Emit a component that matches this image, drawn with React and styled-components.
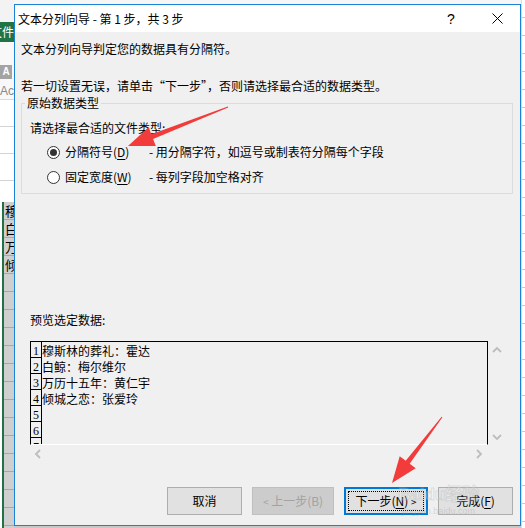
import React from "react";
import styled, { createGlobalStyle } from "styled-components";

const UI_FONT = `"Noto Sans CJK SC", "Microsoft YaHei", sans-serif`;

const GlobalStyle = createGlobalStyle`
  html, body {
    margin: 0;
    padding: 0;
  }

  body {
    width: 525px;
    height: 528px;
    overflow: hidden;
    font-family: ${UI_FONT};
    -webkit-font-smoothing: none;
  }
`;

const previewRows = [
  "穆斯林的葬礼：霍达",
  "白鲸：梅尔维尔",
  "万历十五年：黄仁宇",
  "倾城之恋：张爱玲",
  "",
  "",
  "",
];

const sheetCells = ["穆", "白", "万", "倾", "", "", "", "", "", "", "", "", "", "", "", "", "", ""];

const Chevron = ({ dir }) => {
  const paths = {
    up: "M1 6 L5 2 L9 6",
    down: "M1 2 L5 6 L9 2",
    left: "M6 1 L2 5 L6 9",
    right: "M2 1 L6 5 L2 9",
  };
  const vertical = dir === "up" || dir === "down";
  return (
    <svg width={vertical ? 10 : 8} height={vertical ? 8 : 10} viewBox={vertical ? "0 0 10 8" : "0 0 8 10"}>
      <path d={paths[dir]} fill="none" stroke="#bdbdbd" strokeWidth="1.8" />
    </svg>
  );
};

const App = () => {
  return (
    <>
      <GlobalStyle />
      <Screen>
        <LeftStrip>
          <QuickBar />
          <FileTab>文件</FileTab>
          <RibbonGap />
          <AppIconRow>
            <AppIcon>A</AppIcon>
          </AppIconRow>
          <AppLabel>Acc</AppLabel>
          <SheetLines />
          <SelectedColumn>
            {sheetCells.map((c, i) => (
              <SheetCell key={i}>{c}</SheetCell>
            ))}
          </SelectedColumn>
        </LeftStrip>

        <MainColumn>
          <TopStrip />
          <Dialog>
            <TitleBar>
              <Title>文本分列向导 - 第 1 步，共 3 步</Title>
              <CaptionButton>
                <HelpGlyph>?</HelpGlyph>
              </CaptionButton>
              <CaptionButton>
                <svg width="11" height="11" viewBox="0 0 11 11">
                  <path d="M0.5 0.5 L10.5 10.5 M10.5 0.5 L0.5 10.5" stroke="#000" strokeWidth="1" />
                </svg>
              </CaptionButton>
            </TitleBar>

            <Body>
              <Text>文本分列向导判定您的数据具有分隔符。</Text>
              <Text $gap={21}>若一切设置无误，请单击“下一步”，否则请选择最合适的数据类型。</Text>

              <GroupBox>
                <Legend>原始数据类型</Legend>
                <Text $gap={9}>请选择最合适的文件类型:</Text>
                <RadioRow $gap={8}>
                  <Radio $checked />
                  <span>
                    分隔符号(<u>D</u>)
                  </span>
                  <span>- 用分隔字符，如逗号或制表符分隔每个字段</span>
                </RadioRow>
                <RadioRow $gap={9}>
                  <Radio />
                  <span>
                    固定宽度(<u>W</u>)
                  </span>
                  <span>- 每列字段加空格对齐</span>
                </RadioRow>
              </GroupBox>

              <PreviewSection>
                <Text>预览选定数据:</Text>
                <Preview>
                  <PreviewFrame>
                    {previewRows.map((row, i) => (
                      <PreviewRow key={i}>
                        <RowNumber>{i + 1}</RowNumber>
                        <RowText>{row}</RowText>
                      </PreviewRow>
                    ))}
                  </PreviewFrame>
                  <VScroll>
                    <Chevron dir="up" />
                    <Chevron dir="down" />
                  </VScroll>
                  <HScroll>
                    <Chevron dir="left" />
                    <Chevron dir="right" />
                  </HScroll>
                </Preview>
              </PreviewSection>

              <ButtonRow>
                <Button $w={75}>取消</Button>
                <Button $w={82} disabled>
                  <Small>&lt;</Small> 上一步(B)
                </Button>
                <Button $w={84} $primary>
                  下一步(<u>N</u>) <Small>&gt;</Small>
                </Button>
                <Button $w={75}>
                  完成(<u>F</u>)
                </Button>
              </ButtonRow>
            </Body>
          </Dialog>
          <BottomStrip />
        </MainColumn>

        <RightStrip />

        <Watermark>
          <WatermarkBig>Baidu经验</WatermarkBig>
          <WatermarkSmall>jingyan.baidu.com</WatermarkSmall>
        </Watermark>

        <Annotations width="525" height="528" viewBox="0 0 525 528">
          <polygon
            points="228.2,107.5 153.1,138.9 155.8,145.9 128,146 148.6,127.3 151.3,134.3 227.8,106.5"
            fill="#f23b3b"
          />
          <polygon
            points="442.4,417.3 409.7,463.8 415.7,468.3 392,483 399.7,456.3 405.7,460.8 441.6,416.7"
            fill="#f23b3b"
          />
        </Annotations>
      </Screen>
    </>
  );
};

const Screen = styled.div`
  position: relative;
  display: flex;
  width: 525px;
  height: 528px;
  overflow: hidden;
  background: #ffffff;
`;

/* ---- excel window peeking out behind the dialog ---- */

const LeftStrip = styled.div`
  display: flex;
  flex-direction: column;
  width: 14px;
  flex-shrink: 0;
  overflow: hidden;
`;

const QuickBar = styled.div`
  height: 22px;
  background: #f3f3f3;
`;

const FileTab = styled.div`
  height: 20px;
  background: #217346;
  color: #fff;
  font-size: 12px;
  line-height: 20px;
  white-space: nowrap;
  direction: rtl;
  overflow: hidden;
`;

const RibbonGap = styled.div`
  height: 20px;
  background: #f8f8f8;
`;

const AppIconRow = styled.div`
  height: 20px;
  background: #f8f8f8;
  display: flex;
  align-items: center;
`;

const AppIcon = styled.div`
  width: 12px;
  height: 14px;
  background: #a4a4a4;
  color: #fff;
  font-family: "Liberation Sans", sans-serif;
  font-size: 10px;
  font-weight: bold;
  line-height: 14px;
  text-align: center;
`;

const AppLabel = styled.div`
  height: 18px;
  background: #f8f8f8;
  color: #888;
  font-family: "Liberation Sans", sans-serif;
  font-size: 12px;
  line-height: 18px;
  border-bottom: 1px solid #dadada;
  box-sizing: border-box;
  overflow: hidden;
`;

const SheetLines = styled.div`
  height: 102px;
  background: repeating-linear-gradient(#ffffff 0 26px, #d4d4d4 26px 27px);
`;

const SelectedColumn = styled.div`
  flex: 1;
  border-left: 2px solid #217346;
  margin-left: 2px;
  background: #cfcfcf;
  overflow: hidden;
`;

const SheetCell = styled.div`
  height: 18px;
  box-sizing: border-box;
  border-bottom: 1px solid #a8a8a8;
  font-size: 13px;
  line-height: 17px;
  color: #000;
  padding-left: 1px;
  white-space: nowrap;
`;

const MainColumn = styled.div`
  display: flex;
  flex-direction: column;
  width: 507px;
  flex-shrink: 0;
`;

const TopStrip = styled.div`
  height: 4px;
  background: #f6f6f6;
`;

const BottomStrip = styled.div`
  flex: 1;
  background: #c8c8c8;
`;

const RightStrip = styled.div`
  flex: 1;
  background: repeating-linear-gradient(#ffffff 0 17px, #c8c8c8 17px 18px);
  border-left: 1px solid #dcdcdc;
`;

/* ---- the dialog ---- */

const Dialog = styled.div`
  display: flex;
  flex-direction: column;
  box-sizing: border-box;
  width: 507px;
  height: 522px;
  border: 1px solid #1a82d6;
  background: #f0f0f0;
  color: #000;
`;

const TitleBar = styled.div`
  display: flex;
  align-items: center;
  height: 27px;
  background: #ffffff;
`;

const Title = styled.div`
  flex: 1;
  padding-left: 3px;
  font-size: 12px;
  line-height: 16px;
`;

const CaptionButton = styled.div`
  display: flex;
  align-items: center;
  justify-content: center;
  width: 46px;
  height: 27px;
`;

const HelpGlyph = styled.span`
  font-family: "Liberation Sans", sans-serif;
  font-size: 14px;
  line-height: 16px;
`;

const Body = styled.div`
  flex: 1;
  display: flex;
  flex-direction: column;
  padding: 9px 7px 10px 6px;
`;

const Text = styled.div`
  font-size: 12px;
  line-height: 16px;
  margin-top: ${(p) => p.$gap || 0}px;
  white-space: nowrap;
`;

const GroupBox = styled.fieldset`
  margin: 1px 0 0;
  padding: 0 8px 8px;
  min-width: 0;
  border: 1px solid #dcdcdc;
`;

const Legend = styled.legend`
  padding: 0 2px;
  margin-left: -5px;
  font-size: 12px;
  line-height: 16px;
`;

const RadioRow = styled.div`
  display: grid;
  grid-template-columns: 13px 79px 1fr;
  column-gap: 5px;
  align-items: center;
  padding-left: 17px;
  margin-top: ${(p) => p.$gap}px;
  font-size: 12px;
  line-height: 16px;
  white-space: nowrap;

  u {
    text-underline-offset: 2px;
  }
`;

const Radio = styled.span`
  position: relative;
  box-sizing: border-box;
  width: 13px;
  height: 13px;
  border: 1px solid #333;
  border-radius: 50%;
  background: #fff;

  &::after {
    content: "";
    position: absolute;
    left: 2px;
    top: 2px;
    width: 7px;
    height: 7px;
    border-radius: 50%;
    background: #333;
    display: ${(p) => (p.$checked ? "block" : "none")};
  }
`;

const PreviewSection = styled.div`
  display: flex;
  flex-direction: column;
  gap: 13px;
  margin: 118px 0 0 9px;
`;

const Preview = styled.div`
  display: grid;
  grid-template-columns: 458px 17px;
  grid-template-rows: 104px 17px;
`;

const PreviewFrame = styled.div`
  box-sizing: border-box;
  border: 1px solid #000;
  border-bottom-color: #fff;
  overflow: hidden;
`;

const PreviewRow = styled.div`
  display: flex;
  height: 16px;
  flex-shrink: 0;
`;

const RowNumber = styled.div`
  box-sizing: border-box;
  width: 11px;
  height: 16px;
  flex-shrink: 0;
  border-right: 1px solid #000;
  border-bottom: 1px solid #000;
  font-family: "Liberation Serif", serif;
  font-size: 12px;
  line-height: 18px;
  text-align: center;
`;

const RowText = styled.div`
  font-size: 12px;
  line-height: 17px;
  white-space: nowrap;
`;

const VScroll = styled.div`
  display: flex;
  flex-direction: column;
  align-items: center;
  justify-content: space-between;
  padding: 5px 0 4px;
`;

const HScroll = styled.div`
  display: flex;
  align-items: center;
  justify-content: space-between;
  padding: 0 5px 0 4px;
`;

const ButtonRow = styled.div`
  display: flex;
  justify-content: flex-end;
  gap: 10px;
  margin-top: auto;
`;

const Button = styled.button`
  position: relative;
  box-sizing: border-box;
  width: ${(p) => p.$w}px;
  height: 28px;
  padding: 0;
  font-family: ${UI_FONT};
  font-size: 12px;
  line-height: 16px;
  white-space: nowrap;
  color: #000;
  background: #e1e1e1;
  border: 1px solid #adadad;
  border-radius: 0;

  &:disabled {
    color: #a3a3a3;
    background: #cccccc;
    border-color: #bfbfbf;
  }

  ${(p) =>
    p.$primary &&
    `
    border: 2px solid #0078d7;

    &::after {
      content: "";
      position: absolute;
      inset: 2px;
      border: 1px dotted #000;
    }
  `}

  u {
    text-underline-offset: 2px;
  }
`;

const Small = styled.span`
  font-size: 10px;
`;

/* ---- things laid over the screenshot ---- */

const Watermark = styled.div`
  position: absolute;
  left: 398px;
  top: 484px;
  display: flex;
  flex-direction: column;
  align-items: center;
  pointer-events: none;
  opacity: 0.3;
`;

const WatermarkBig = styled.div`
  font-family: "Liberation Sans", ${UI_FONT};
  font-size: 17px;
  font-weight: bold;
  line-height: 22px;
  color: #ffffff;
  -webkit-text-stroke: 1px #b0b0b0;
  white-space: nowrap;
`;

const WatermarkSmall = styled.div`
  font-family: "Liberation Sans", sans-serif;
  font-size: 9px;
  line-height: 11px;
  color: #9a9a9a;
`;

const Annotations = styled.svg`
  position: absolute;
  left: 0;
  top: 0;
  pointer-events: none;
`;

export default App;
